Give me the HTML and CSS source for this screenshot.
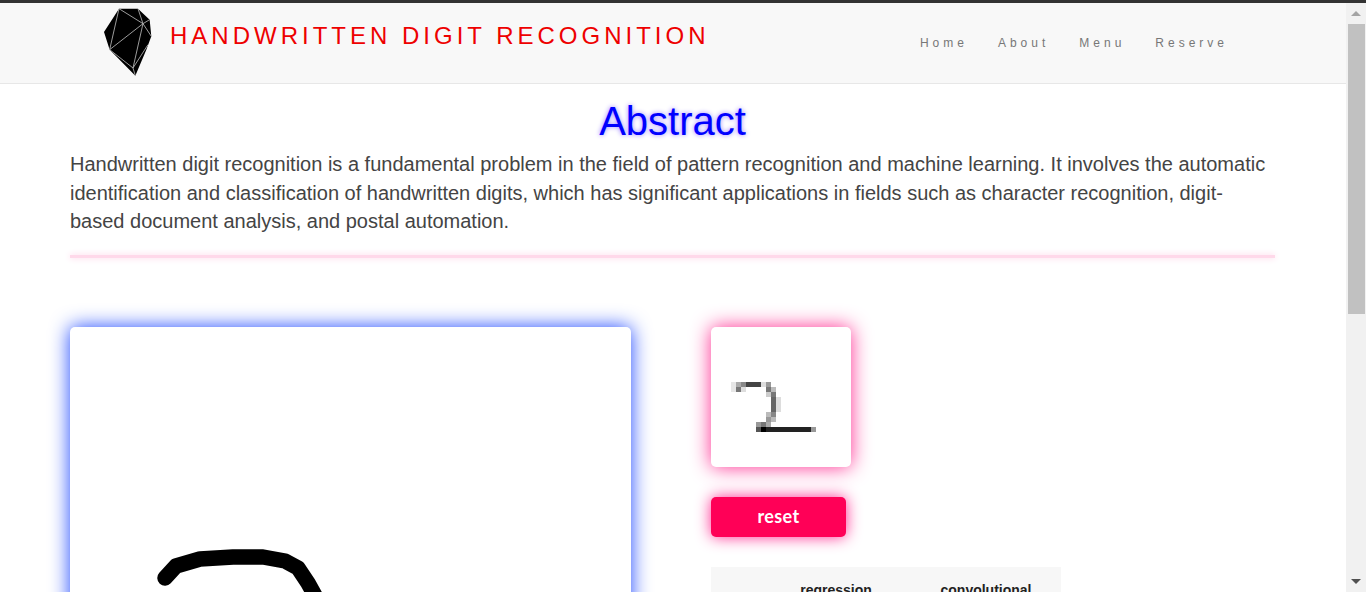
FILE: index.html
```html
<!DOCTYPE html>
<html lang="en">
<head>
<meta charset="UTF-8">
<meta name="viewport" content="width=device-width, initial-scale=1.0">
<title>Handwritten Digit Recognition</title>
<link rel="stylesheet" href="styles.css">
</head>
<body>

<div class="window">
    <div class="page">
        <header class="navbar">
            <div class="brand">
                <svg class="logo" viewBox="40 25 148 206" aria-hidden="true">
                    <polygon class="logo-shape" points="88,27 145,27 180,60 185,110 170,150 137,228 75,165 60,150 43,97"/>
                    <path class="logo-lines" d="M88 27L160 72M88 27L60 150M60 150L160 72M160 72L130 205M145 27L160 72M160 72L180 60M160 72L185 110M60 150L130 205M130 205L175 135M130 205L137 228"/>
                </svg>
                <span class="brand-name">HANDWRITTEN DIGIT RECOGNITION</span>
            </div>
            <nav class="nav-links">
                <a href="#">Home</a>
                <a href="#">About</a>
                <a href="#">Menu</a>
                <a href="#">Reserve</a>
            </nav>
        </header>

        <section class="abstract">
            <h1>Abstract</h1>
            <p>Handwritten digit recognition is a fundamental problem in the field of pattern recognition and machine learning. It involves the automatic identification and classification of handwritten digits, which has significant applications in fields such as character recognition, digit-based document analysis, and postal automation.</p>
            <hr class="divider">
        </section>

        <section class="workspace">
            <div class="draw-canvas">
                <svg class="stroke" viewBox="0 0 561 561" aria-hidden="true">
                    <path d="M95 251L106 239L130 232L163 230L193 230L215 234L228 241L238 256L243 265L262 300"/>
                </svg>
            </div>
            <div class="side">
                <div class="preview">
                    <svg class="digit" viewBox="0 0 28 28" aria-hidden="true">
                        <rect x="4" y="11" width="1" height="1" fill="#e6e6e6"/>
                        <rect x="5" y="11" width="1" height="1" fill="#aaa"/>
                        <rect x="6" y="11" width="1" height="1" fill="#888"/>
                        <rect x="7" y="11" width="3" height="1" fill="#444"/>
                        <rect x="10" y="11" width="1" height="1" fill="#ddd"/>
                        <rect x="11" y="11" width="1" height="1" fill="#999"/>
                        <rect x="4" y="12" width="1" height="1" fill="#e6e6e6"/>
                        <rect x="5" y="12" width="1" height="1" fill="#777"/>
                        <rect x="6" y="12" width="1" height="1" fill="#ddd"/>
                        <rect x="11" y="12" width="1" height="1" fill="#777"/>
                        <rect x="12" y="12" width="1" height="1" fill="#bbb"/>
                        <rect x="11" y="13" width="1" height="1" fill="#ccc"/>
                        <rect x="12" y="13" width="1" height="1" fill="#777"/>
                        <rect x="12" y="14" width="1" height="3" fill="#666"/>
                        <rect x="13" y="14" width="1" height="3" fill="#ddd"/>
                        <rect x="11" y="17" width="1" height="1" fill="#bbb"/>
                        <rect x="12" y="17" width="1" height="1" fill="#888"/>
                        <rect x="11" y="18" width="1" height="1" fill="#999"/>
                        <rect x="12" y="18" width="1" height="1" fill="#bbb"/>
                        <rect x="9" y="19" width="1" height="1" fill="#999"/>
                        <rect x="10" y="19" width="1" height="1" fill="#777"/>
                        <rect x="11" y="19" width="1" height="1" fill="#aaa"/>
                        <rect x="9" y="20" width="1" height="1" fill="#555"/>
                        <rect x="10" y="20" width="1" height="1" fill="#000"/>
                        <rect x="11" y="20" width="9" height="1" fill="#222"/>
                        <rect x="20" y="20" width="1" height="1" fill="#999"/>
                    </svg>
                </div>
                <button class="reset-btn" type="button">reset</button>
                <table class="results">
                    <thead>
                        <tr>
                            <th></th>
                            <th>regression</th>
                            <th>convolutional</th>
                        </tr>
                    </thead>
                </table>
            </div>
        </section>
    </div>

    <div class="scrollbar" aria-hidden="true">
        <div class="arrow-btn"><span class="arrow-up"></span></div>
        <div class="thumb"></div>
        <div class="track"></div>
        <div class="arrow-btn"><span class="arrow-down"></span></div>
    </div>
</div>

</body>
</html>
```

FILE: styles.css
```css
html, body {
    height: 100%;
    margin: 0;
    overflow: hidden;
}

body {
    font-family: "Liberation Sans", Arial, sans-serif;
    background-color: #fff;
    border-top: 3px solid #333;
    box-sizing: border-box;
}

.window {
    display: flex;
    height: 100%;
}

.page {
    flex: 1;
    min-width: 0;
    overflow: hidden;
}

/* navbar */
.navbar {
    display: flex;
    justify-content: space-between;
    height: 81px;
    box-sizing: border-box;
    padding: 5px 118px 0 103px;
    background-color: #f8f8f8;
    border-bottom: 1px solid #e7e7e7;
}

.brand {
    display: flex;
    align-items: flex-start;
}

.logo {
    width: 49.33px;
    height: 68.67px;
    flex: none;
}

.logo-shape {
    fill: #000;
}

.logo-lines {
    fill: none;
    stroke: #bbb;
    stroke-width: 2.5;
}

.brand-name {
    margin: 14px 0 0 17.67px;
    font-size: 24px;
    line-height: 28px;
    letter-spacing: 4px;
    color: #e00;
}

.nav-links {
    display: flex;
    gap: 30px;
    padding-top: 28px;
}

.nav-links a {
    font-size: 12px;
    line-height: 14px;
    letter-spacing: 4px;
    color: #777;
    text-decoration: none;
}

/* abstract */
.abstract {
    padding: 0 71px 0 70px;
}

.abstract h1 {
    margin: 14px 0 0;
    font-size: 40px;
    font-weight: 400;
    line-height: 46px;
    text-align: center;
    color: #00f;
    text-shadow: 0 0 5px #9a80ff;
}

.abstract p {
    margin: 6px 0 0;
    font-size: 20px;
    line-height: 1.42857;
    color: #444;
}

.divider {
    height: 3px;
    margin: 19px 0 0;
    border: none;
    background-color: #ffd9ea;
    box-shadow: 0 0 6px #ffcce3;
}

/* canvas and results */
.workspace {
    display: flex;
    gap: 80px;
    padding: 69px 0 0 70px;
}

.draw-canvas {
    width: 561px;
    height: 561px;
    flex: none;
    border-radius: 5px;
    background-color: #fff;
    box-shadow: 0 0 20px #1a44ff;
}

.stroke {
    display: block;
    width: 100%;
    height: 100%;
}

.stroke path {
    fill: none;
    stroke: #000;
    stroke-width: 15.5;
    stroke-linecap: round;
    stroke-linejoin: round;
}

.side {
    width: 350px;
}

.preview {
    width: 140px;
    height: 140px;
    border-radius: 5px;
    background-color: #fff;
    box-shadow: 0 0 20px #ff2a90;
}

.digit {
    display: block;
    width: 100%;
    height: 100%;
    shape-rendering: crispEdges;
}

.reset-btn {
    display: block;
    width: 135px;
    height: 40px;
    margin-top: 30px;
    padding: 0 0 2px;
    border: none;
    border-radius: 5px;
    background-color: #ff0057;
    box-shadow: 0 0 15px #ff2a90;
    font-family: Lato, sans-serif;
    font-size: 18px;
    font-weight: 700;
    letter-spacing: 0.4px;
    color: #fff;
}

.results {
    width: 100%;
    margin-top: 30px;
    border-collapse: collapse;
    table-layout: fixed;
    background-color: #f7f7f7;
}

.results th {
    padding: 15px 0 8px;
    width: 150px;
    font-size: 14px;
    line-height: 16px;
    text-align: center;
    color: #222;
}

.results th:first-child {
    width: 50px;
}

/* fake window scrollbar */
.scrollbar {
    display: flex;
    flex-direction: column;
    align-items: center;
    width: 20px;
    flex: none;
    background-color: #f1f1f1;
}

.arrow-btn {
    display: flex;
    align-items: center;
    justify-content: center;
    width: 100%;
    height: 21px;
    flex: none;
}

.arrow-up,
.arrow-down {
    width: 0;
    height: 0;
    border-left: 5px solid transparent;
    border-right: 5px solid transparent;
}

.arrow-up {
    border-bottom: 5px solid #a3a3a3;
}

.arrow-down {
    border-top: 5px solid #505050;
}

.thumb {
    width: 17px;
    height: 290px;
    flex: none;
    background-color: #c1c1c1;
}

.track {
    flex: 1;
}
```
